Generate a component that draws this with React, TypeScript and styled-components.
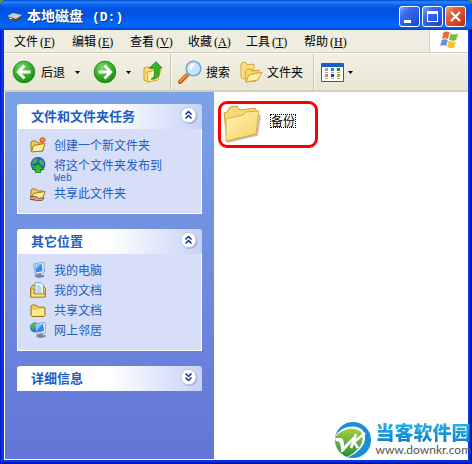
import React from 'react';
import styled, { createGlobalStyle } from 'styled-components';

const GlobalStyle = createGlobalStyle`
  * { box-sizing: border-box; }
  body {
    margin: 0;
    background: #5c9a3c;
    font-family: "Noto Sans CJK SC", sans-serif;
    font-size: 12px;
    line-height: 16px;
    color: #000;
  }
  button { font: inherit; color: inherit; border: 0; background: none; padding: 0; margin: 0; }
`;

const Window = styled.div`
  position: relative;
  display: flex;
  flex-direction: column;
  min-height: 100vh;
  padding: 0 4px 4px;
  border-radius: 7px 7px 0 0;
  background: #0437e0;
  box-shadow: inset 1px 0 #0019cf, inset -1px 0 #0010a0, inset -2px 0 #001cc4, inset 0 -1px #00108c, inset 0 -2px #001cc4;
`;

const TitleBar = styled.header`
  display: flex;
  align-items: center;
  gap: 4px;
  height: 30px;
  margin: 0 -4px;
  padding: 3px 6px 0;
  border-radius: 7px 7px 0 0;
  color: #fff;
  background: linear-gradient(#0044cc 0, #2a86fa 2px, #0b62ee 5px, #0054e3 9px, #0056e6 17px, #0066fc 23px, #0264f4 27px, #0040c4 100%);
`;

const Title = styled.h1`
  display: flex;
  align-items: baseline;
  flex: 1;
  gap: 9px;
  margin: 0;
  font-size: 14px;
  font-weight: 700;
  line-height: 20px;
  text-shadow: 1px 1px #0a318f;
`;

const Drive = styled.span`
  font-family: "Liberation Mono", monospace;
  font-size: 13px;
`;

const WindowButtons = styled.div`
  display: flex;
  gap: 2px;
`;

const WindowButton = styled.button<{ $close?: boolean }>`
  width: 21px;
  height: 21px;
  border: 1px solid #fff;
  border-radius: 3px;
  background: ${(p) =>
    p.$close
      ? 'linear-gradient(135deg, #f0a088 0, #e2603c 30%, #d8401a 70%, #b42c08 100%)'
      : 'linear-gradient(135deg, #86a8f4 0, #3a6aea 30%, #2558de 70%, #1a44c0 100%)'};
  svg { display: block; }
`;

const MenuRow = styled.div`
  display: flex;
  height: 23px;
  background: #efede0;
  border-bottom: 1px solid #d2cdb8;
`;

const Menu = styled.nav`
  flex: 1;
  display: flex;
  padding-left: 10px;
`;

const MenuButton = styled.button`
  flex: 0 0 58px;
  text-align: left;
  white-space: nowrap;
`;

const Mnemonic = styled.span`
  margin-left: 2px;
  font-family: "Liberation Serif", serif;
  font-size: 12px;
`;

const FlagBox = styled.div`
  width: 39px;
  padding-left: 9px;
  border-left: 1px solid #d2cdb8;
  background: #fff;
  svg { display: block; }
`;

const Toolbar = styled.div`
  display: flex;
  align-items: center;
  height: 39px;
  padding: 0 8px;
  border-top: 1px solid #fff;
  border-bottom: 2px solid #d2cfbd;
  background: linear-gradient(#f2f0e6, #e9e6d4);
`;

const ToolButton = styled.button<{ $gap?: number; $after?: number }>`
  display: flex;
  align-items: center;
  gap: ${(p) => p.$gap ?? 4}px;
  white-space: nowrap;
  margin-right: ${(p) => p.$after ?? 10}px;
`;

const ToolLabel = styled.span<{ $menu?: boolean }>`
  margin-right: ${(p) => (p.$menu ? 5 : 0)}px;
`;

const Separator = styled.div`
  align-self: stretch;
  width: 2px;
  margin-right: 6px;
  border-left: 1px solid #c9c5b2;
  border-right: 1px solid #faf9f2;
`;

const Client = styled.main`
  flex: 1;
  display: flex;
  padding: 0 0 1px 1px;
  background: #fff;
`;

const Sidebar = styled.aside`
  flex: 0 0 209px;
  display: flex;
  flex-direction: column;
  gap: 15px;
  padding: 12px;
  background: linear-gradient(#7ba2e7, #6375d6);
  color: #215dc6;
`;

const PanelHeader = styled.div`
  display: flex;
  align-items: center;
  justify-content: space-between;
  height: 25px;
  padding: 0 2px 0 14px;
  border-radius: 3px 3px 0 0;
  background: linear-gradient(90deg, #fff 50%, #c6d3f7);
`;

const PanelTitle = styled.h2`
  margin: 0;
  padding-bottom: 2px;
  font-size: 13px;
  font-weight: 700;
  line-height: 16px;
`;

const PanelBody = styled.ul`
  display: flex;
  flex-direction: column;
  gap: 4px;
  list-style: none;
  margin: 0;
  padding: 8px 12px 12px;
  border: 1px solid #fff;
  border-top: 0;
  background: #d6dff7;
`;

const TaskLink = styled.a`
  display: flex;
  gap: 8px;
  color: inherit;
  text-decoration: none;
  white-space: nowrap;
  svg { flex: none; }
`;

const TaskText = styled.span`
  line-height: 15px;
`;

const SecondLine = styled.span`
  display: block;
  margin-bottom: -4px;
  font-family: "Liberation Mono", monospace;
  font-size: 10px;
  line-height: 13px;
`;

const Files = styled.section`
  flex: 1;
  padding: 9px 4px;
`;

const FileItem = styled.button`
  display: flex;
  align-items: center;
  gap: 9px;
  width: 100px;
  height: 47px;
  padding: 0 0 2px 2px;
  border: 3px solid #f00;
  border-radius: 9px;
`;

const FileName = styled.span`
  padding: 0 1px;
  line-height: 14px;
  outline: 1px dotted #000;
  outline-offset: -1px;
  margin-bottom: 5px;
`;

const Watermark = styled.a`
  position: absolute;
  right: 1px;
  bottom: 4px;
  display: flex;
  align-items: center;
  gap: 3px;
  text-decoration: none;
  svg { flex: none; }
`;

const Brand = styled.span`
  display: block;
  font-size: 19px;
  font-weight: 900;
  line-height: 20px;
  color: transparent;
  background: linear-gradient(#2bb4ef, #0b7fcb);
  background-clip: text;
`;

const Site = styled.span`
  display: block;
  font-family: Lato, sans-serif;
  font-size: 12px;
  line-height: 16px;
  color: #505458;
`;

const Caret = () => (
  <svg width="5" height="3" viewBox="0 0 5 3"><path d="M0 0h5L2.5 3z" fill="#000" /></svg>
);

const NavIcon = ({ flip }: { flip?: boolean }) => (
  <svg width="24" height="24" viewBox="0 0 24 24">
    <defs>
      <radialGradient id={flip ? 'fwd' : 'bck'} cx="40%" cy="30%" r="75%">
        <stop offset="0" stopColor="#7fdc6c" /><stop offset=".55" stopColor="#36b02a" /><stop offset="1" stopColor="#1c8416" />
      </radialGradient>
    </defs>
    <circle cx="12" cy="12" r="10.8" fill={`url(#${flip ? 'fwd' : 'bck'})`} stroke="#279020" />
    <g transform={flip ? 'matrix(-1 0 0 1 24 0)' : undefined} fill="none" stroke="#fff" strokeWidth="2.8">
      <path d="M12.5 5.5L6.2 12l6.3 6.5M7 12h11.5" />
    </g>
  </svg>
);

const UpIcon = () => (
  <svg width="20" height="22" viewBox="0 0 20 22">
    <path d="M1 7l5-1 1 2 6-1v12l-8 2-4-2z" fill="#fbe07a" stroke="#d19a1c" />
    <path d="M4 11l14-3-3 11-10 2z" fill="#fff0a4" stroke="#d9a52a" />
    <path d="M8 18c4-1 4-6 3-11H6.500L13 .7 19 7h-3c1 7-1 12-8 11z" fill="#36b02d" stroke="#168018" strokeWidth=".8" />
  </svg>
);

const SearchIcon = () => (
  <svg width="24" height="24" viewBox="0 0 24 24">
    <path d="M9 15l-7 7" stroke="#b85010" strokeWidth="4" strokeLinecap="round" />
    <path d="M9 14.500l-7 7" stroke="#f8903c" strokeWidth="2.200" strokeLinecap="round" />
    <circle cx="15.500" cy="8.500" r="7.300" fill="#c5e7fd" stroke="#7da6d2" strokeWidth="1.600" />
    <path d="M11 9c0-4 3-6 7-5-3 1-4 3-4 6z" fill="#fff" />
  </svg>
);

const FoldersIcon = () => (
  <svg width="23" height="22" viewBox="0 0 23 22" stroke="#d6a333">
    <path d="M1 3l2-2 3 1 1 2 7-1v4L8 17l-5 1-2-2z" fill="#fbe183" />
    <path d="M5 10l2-2 4 0 1 2 7-1v4l-3 7-10 1z" fill="#f7d264" />
    <path d="M9 14l13-3-4 8-12 2z" fill="#fff0a8" />
  </svg>
);

const ViewsIcon = () => (
  <svg width="23" height="19" viewBox="0 0 23 19">
    <rect width="23" height="19" rx="1" fill="#1a5fc8" />
    <path d="M1 4h21v14H1z" fill="#fff" />
    {['#a09ccc', '#1c7fe0', '#109418', '#f87850', '#103fa8', '#d09c10'].map((c, i) => (
      <g key={c}>
        <path d={`M${4 + (i % 3) * 6} ${5 + Math.floor(i / 3) * 6}h3v3h-3z`} fill={c} />
        <path d={`M${4 + (i % 3) * 6} ${9 + Math.floor(i / 3) * 6}h3v1h-3z`} fill="#aaa" />
      </g>
    ))}
  </svg>
);

const FlagIcon = () => (
  <svg width="20" height="20" viewBox="0 0 20 20">
    <path d="M4.500 2.500q3-2 6 0L9 9Q6 7.500 3 9z" fill="#ee6837" />
    <path d="M11.500 3.500q3 1.800 7.500 0l-1.800 6.500q-3.500 1.800-7.200-.5z" fill="#7abd3a" />
    <path d="M2.700 10q3-1.500 6 0l-1.500 6q-3-1.600-6 0z" fill="#5a91e2" />
    <path d="M9.700 10.700q3.500 2 7.200.5l-1.800 6.300q-4 1.500-7-.5z" fill="#f8c234" />
  </svg>
);

const DriveIcon = () => (
  <svg width="17" height="12" viewBox="0 0 17 12">
    <path d="M1 5l6-3 9 2v3l-6 4-9-3z" fill="#454b50" />
    <path d="M1 5l6-3 9 2-6 4z" fill="#c9ced2" />
    <path d="M3 7l3 1" stroke="#eee" />
  </svg>
);

const Chevron = ({ down }: { down?: boolean }) => (
  <svg width="23" height="22" viewBox="0 0 23 22">
    <circle cx="12.500" cy="12" r="8" fill="#8e9cc8" opacity=".7" />
    <circle cx="11.500" cy="11" r="7.700" fill="#fff" stroke="#b8c2df" />
    <path
      d={down ? 'M8.500 7.500l3 3 3-3M8.500 11.500l3 3 3-3' : 'M8.500 10.500l3-3 3 3M8.500 14.500l3-3 3 3'}
      fill="none" stroke="#0c2f92" strokeWidth="1.500"
    />
  </svg>
);

type IconKind = 'new' | 'publish' | 'share' | 'computer' | 'docs' | 'shared' | 'network';

const Screen = () => (
  <>
    <path d="M3.500 2l8-1.500 2.500.5.500 9-2 1.500-7 1z" fill="#e2e9f5" stroke="#8093b8" strokeWidth=".8" />
    <path d="M4.500 3l7-1.200 1 7.200-6.500 1.500z" fill="#2f8cf0" />
    <path d="M4.500 3l7-1.200-6 6z" fill="#8cc8ff" />
    <path d="M7 12l4-1v2l3 0v2l-5 1-4-1v-1.500z" fill="#7c86a4" />
  </>
);

const SmallFolder = () => (
  <>
    <path d="M1 14V5l1-1h4l2 2h5v8z" fill="#f4cc58" stroke="#a77816" />
    <path d="M1.500 15l2-6.500L15 6.500 12.500 14z" fill="#fff0a4" stroke="#a77816" />
  </>
);

const TaskIcon = ({ kind }: { kind: IconKind }) => (
  <svg width="16" height="16" viewBox="0 0 16 16">
    {(kind === 'new' || kind === 'share') && <SmallFolder />}
    {kind === 'new' && (
      <>
        <path d="M12.500 0v6M9.500 3h6M10.500 1l4 4M14.500 1l-4 4" stroke="#ee4a18" strokeWidth="1.300" />
        <circle cx="12.500" cy="3" r="1.300" fill="#ffb02c" />
      </>
    )}
    {kind === 'share' && <path d="M0 11.500h6l3 2 3-1 2 1-2 2H6l-2-1H0z" fill="#e6a070" stroke="#52392a" strokeWidth=".7" />}
    {kind === 'publish' && (
      <>
        <circle cx="8" cy="7.200" r="7" fill="#1c66bd" stroke="#134b7b" strokeWidth=".6" />
        <path d="M3 3l4-2 1 2-2 3-4 1zM10 2l4 3v4l-3-1-2-3zM1 8l4 1v4z" fill="#4cae4b" />
        <path d="M8 6.500l6 6h-3.500V16h-5v-3.500H2z" fill="#2fc033" stroke="#0b6814" strokeWidth=".7" />
      </>
    )}
    {kind === 'computer' && <Screen />}
    {kind === 'docs' && (
      <>
        <path d="M.7 15V6l2-3h10l2.600 3v9z" fill="#f2ca60" stroke="#a77816" />
        <path d="M5 .8h6l2.500 2.500V12H5z" fill="#f8fcff" stroke="#4e8cc8" strokeWidth=".8" />
        <path d="M6.500 4h4M6.500 6h5M6.500 8h5M6.500 10h5" stroke="#5a9ddd" strokeWidth=".8" />
        <path d="M1 7h3v5h11v3H1z" fill="#fae18a" stroke="#a77816" strokeWidth=".7" />
      </>
    )}
    {kind === 'shared' && (
      <>
        <path d="M1 13.500V4l1-1h4l2 2h6l1 1v7.500l-1 1H2z" fill="#f3c751" stroke="#a77816" />
        <path d="M2 8h5l1-1h6v6.500H2z" fill="#ffec94" />
      </>
    )}
    {kind === 'network' && (
      <>
        <circle cx="5" cy="5.500" r="5" fill="#267bc9" />
        <path d="M.5 3l4-2.500 1 3-2 4-3-2z" fill="#54b545" />
        <g transform="translate(1.500 0)"><Screen /></g>
      </>
    )}
  </svg>
);

const BigFolder = () => (
  <svg width="38" height="40" viewBox="0 0 38 40">
    <defs>
      <linearGradient id="front" x1="0" y1="0" x2="1" y2="1">
        <stop offset="0" stopColor="#fff6ba" /><stop offset="1" stopColor="#f6ce5c" />
      </linearGradient>
    </defs>
    <path d="M4 38l30-7 3-20" fill="none" stroke="#999" strokeWidth="2" opacity=".6" />
    <path d="M1 9l3-1 3-5 7-1 3 4 15-2 2 4-1 22-29 7z" fill="#f5d878" stroke="#caa136" />
    <path d="M3 37l0-22 17-4 3-3 13-1-3 23z" fill="url(#front)" stroke="#dcae3e" />
  </svg>
);

const LogoMark = () => (
  <svg width="38" height="40" viewBox="0 0 38 40">
    <defs>
      <linearGradient id="leaf" x1="0" y1="0" x2="0" y2="1">
        <stop offset="0" stopColor="#a3cf3e" /><stop offset="1" stopColor="#1f8f38" />
      </linearGradient>
    </defs>
    <circle cx="19" cy="20" r="18" fill="#1a8ed6" />
    <path d="M2 15c8-11 23-10 27-4 6 10-2 21-17 27C5 35 0 25 2 15z" fill="#fff" />
    <path d="M2 16C10 7 23 7 27 12c5 9-2 19-14 25C5 34 0 26 2 16z" fill="url(#leaf)" />
    <path d="M1 18h6c2 0 3 3 3 8l9-9h3L9 32H7C7 24 6 21 2 21z" fill="#fff" />
    <path d="M22 14l-5 14M31 13l-11 9 4 6" fill="none" stroke="#fff" strokeWidth="2.600" />
  </svg>
);

const menus: [string, string][] = [
  ['文件', 'F'], ['编辑', 'E'], ['查看', 'V'], ['收藏', 'A'], ['工具', 'T'], ['帮助', 'H'],
];

interface Task { kind: IconKind; label: string; second?: string }

const folderTasks: Task[] = [
  { kind: 'new', label: '创建一个新文件夹' },
  { kind: 'publish', label: '将这个文件夹发布到', second: 'Web' },
  { kind: 'share', label: '共享此文件夹' },
];

const places: Task[] = [
  { kind: 'computer', label: '我的电脑' },
  { kind: 'docs', label: '我的文档' },
  { kind: 'shared', label: '共享文档' },
  { kind: 'network', label: '网上邻居' },
];

const Panel = ({ title, tasks }: { title: string; tasks?: Task[] }) => (
  <section>
    <PanelHeader>
      <PanelTitle>{title}</PanelTitle>
      <button type="button" aria-label={title} aria-expanded={!!tasks}><Chevron down={!tasks} /></button>
    </PanelHeader>
    {tasks && (
      <PanelBody>
        {tasks.map((t) => (
          <li key={t.label}>
            <TaskLink href="#">
              <TaskIcon kind={t.kind} />
              <TaskText>{t.label}{t.second && <SecondLine>{t.second}</SecondLine>}</TaskText>
            </TaskLink>
          </li>
        ))}
      </PanelBody>
    )}
  </section>
);

export default function App() {
  return (
    <>
      <GlobalStyle />
      <Window>
        <TitleBar>
          <DriveIcon />
          <Title>本地磁盘 <Drive>(D:)</Drive></Title>
          <WindowButtons>
            <WindowButton type="button" aria-label="最小化">
              <svg width="19" height="19"><path d="M4 13h7v3H4z" fill="#fff" /></svg>
            </WindowButton>
            <WindowButton type="button" aria-label="最大化">
              <svg width="19" height="19"><path d="M4 4h11v11H4zM5 7v7h9V7z" fill="#fff" fillRule="evenodd" /></svg>
            </WindowButton>
            <WindowButton type="button" aria-label="关闭" $close>
              <svg width="19" height="19"><path d="M5 5l9 9M14 5l-9 9" stroke="#fff" strokeWidth="2.200" /></svg>
            </WindowButton>
          </WindowButtons>
        </TitleBar>
        <MenuRow>
          <Menu>
            {menus.map(([label, key]) => (
              <MenuButton type="button" key={key}>{label}<Mnemonic>(<u>{key}</u>)</Mnemonic></MenuButton>
            ))}
          </Menu>
          <FlagBox><FlagIcon /></FlagBox>
        </MenuRow>
        <Toolbar>
          <ToolButton type="button" $gap={5} $after={13}><NavIcon /><ToolLabel $menu>后退</ToolLabel><Caret /></ToolButton>
          <ToolButton type="button" aria-label="前进" $gap={9} $after={12}><NavIcon flip /><Caret /></ToolButton>
          <ToolButton type="button" aria-label="向上" $after={7}><UpIcon /></ToolButton>
          <Separator />
          <ToolButton type="button"><SearchIcon /><ToolLabel>搜索</ToolLabel></ToolButton>
          <ToolButton type="button"><FoldersIcon /><ToolLabel>文件夹</ToolLabel></ToolButton>
          <Separator />
          <ToolButton type="button" aria-label="查看"><ViewsIcon /><Caret /></ToolButton>
        </Toolbar>
        <Client>
          <Sidebar>
            <Panel title="文件和文件夹任务" tasks={folderTasks} />
            <Panel title="其它位置" tasks={places} />
            <Panel title="详细信息" />
          </Sidebar>
          <Files>
            <FileItem type="button"><BigFolder /><FileName>备份</FileName></FileItem>
          </Files>
        </Client>
        <Watermark href="#">
          <LogoMark />
          <span><Brand>当客软件园</Brand><Site>www.downkr.com</Site></span>
        </Watermark>
      </Window>
    </>
  );
}
